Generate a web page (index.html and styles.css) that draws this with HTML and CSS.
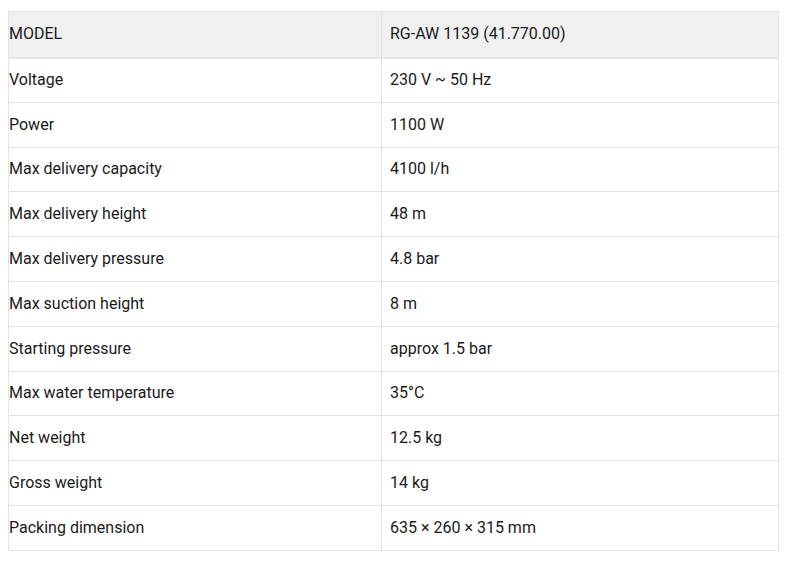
FILE: index.html
```html
<!DOCTYPE html>
<html>
<head>
<meta charset="utf-8">
<link rel="stylesheet" href="styles.css">
</head>
<body>
<table class="specs">
  <thead>
    <tr><th class="c1">MODEL</th><th class="c2">RG-AW 1139 (41.770.00)</th></tr>
  </thead>
  <tbody>
    <tr><td class="c1">Voltage</td><td class="c2">230 V ~ 50 Hz</td></tr>
    <tr><td class="c1">Power</td><td class="c2">1100 W</td></tr>
    <tr><td class="c1">Max delivery capacity</td><td class="c2">4100 l/h</td></tr>
    <tr><td class="c1">Max delivery height</td><td class="c2">48 m</td></tr>
    <tr><td class="c1">Max delivery pressure</td><td class="c2">4.8 bar</td></tr>
    <tr><td class="c1">Max suction height</td><td class="c2">8 m</td></tr>
    <tr><td class="c1">Starting pressure</td><td class="c2">approx 1.5 bar</td></tr>
    <tr><td class="c1">Max water temperature</td><td class="c2">35°C</td></tr>
    <tr><td class="c1">Net weight</td><td class="c2">12.5 kg</td></tr>
    <tr><td class="c1">Gross weight</td><td class="c2">14 kg</td></tr>
    <tr><td class="c1">Packing dimension</td><td class="c2">635 × 260 × 315 mm</td></tr>
  </tbody>
</table>
</body>
</html>
```
FILE: styles.css
```css
html, body {
  margin: 0;
  background: #fff;
}
body {
  padding: 11px 12px 0 8px;
  font-family: Roboto, "Liberation Sans", sans-serif;
  font-size: 16px;
  color: #1a1a1a;
}
.specs {
  width: 771px;
  border-collapse: collapse;
  border: 1px solid #e3e3e3;
}
.specs th, .specs td {
  text-align: left;
  font-weight: 400;
  height: 44.8px;
  padding: 0;
  line-height: 22px;
  border-bottom: 1px solid #e3e3e3;
  box-sizing: border-box;
}
.specs thead th {
  background: #f0f0f0;
  border-bottom: 2px solid #e3e3e3;
  height: 46px;
}
.specs .c1 {
  width: 373px;
  padding-left: 0;
  border-right: 1px solid #e3e3e3;
}
.specs .c2 {
  padding-left: 8px;
}
```
